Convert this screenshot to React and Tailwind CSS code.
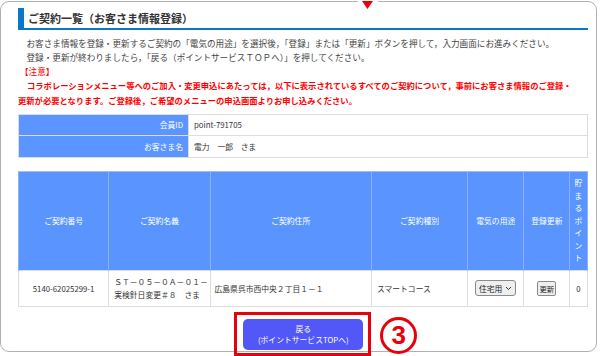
import React from "react";

const headCell =
  "border-x border-[#8fb0f5] bg-[#5a94ff] text-white text-[7.8px] font-normal text-center align-middle";
const bodyCell = "border border-[#dddddd] text-[7.8px] text-[#333] align-middle";

const App = () => {
  return (
    <div className="relative w-[600px] h-[356px] bg-white font-['Noto_Sans_CJK_JP',sans-serif] text-[#444]">
      {/* top pointer */}
      <div className="absolute top-0 left-[358px] w-[20px] h-[4px] bg-white" />
      <svg className="absolute top-0 left-[362px]" width="11" height="8" viewBox="0 0 11 8">
        <polygon points="0,0 11,0 5.5,8" fill="#e8000b" />
      </svg>

      <div className="mt-px h-[351px] w-[597px] border-[1.5px] border-[#b0b0b0] rounded-[9px] pl-[17px] pr-[8.5px] pt-[5.5px]">
        {/* title */}
        <div className="flex h-[22px] border-b-2 border-[#0a78c8]">
          <div className="w-[6px] bg-[#0a78c8]" />
          <h1 className="pl-[4px] text-[11px] font-bold leading-[21px] text-[#333]">
            ご契約一覧（お客さま情報登録）
          </h1>
        </div>

        {/* notes */}
        <div className="mt-[6px] text-[8.6px] leading-[14.3px] whitespace-nowrap">
          <p className="pl-[8.5px]">
            お客さま情報を登録・更新するご契約の「電気の用途」を選択後，「登録」または「更新」ボタンを押して，入力画面にお進みください。
          </p>
          <p className="pl-[8.5px]">
            登録・更新が終わりましたら，「戻る（ポイントサービスＴＯＰへ）」を押してください。
          </p>
          <p className="pl-[2px] text-[#ff0000]">【注意】</p>
          <p className="text-[#ff0000] font-bold text-[8.3px]">
            <span className="pl-[9px]" />
            コラボレーションメニュー等へのご加入・変更申込にあたっては，以下に表示されているすべてのご契約について，事前にお客さま情報のご登録・
            <br />
            更新が必要となります。ご登録後，ご希望のメニューの申込画面よりお申し込みください。
          </p>
        </div>

        {/* member info */}
        <table className="mt-[7px] w-full table-fixed border-collapse border border-[#dddddd]">
          <colgroup>
            <col className="w-[170px]" />
            <col />
          </colgroup>
          <tbody>
            <tr className="h-[21px]">
              <td className="bg-[#5b95ff] border border-[#dddddd] text-right pr-[5px] text-white text-[7.8px]">
                会員ID
              </td>
              <td className="border border-[#dddddd] pl-[5px] text-[7.8px] text-[#333]">point-791705</td>
            </tr>
            <tr className="h-[22px]">
              <td className="bg-[#5b95ff] border border-[#dddddd] text-right pr-[5px] text-white text-[7.8px]">
                お客さま名
              </td>
              <td className="border border-[#dddddd] pl-[5px] text-[7.8px] text-[#333]">
                電力　一郎　さま
              </td>
            </tr>
          </tbody>
        </table>

        {/* contracts */}
        <table className="mt-[13px] w-full table-fixed border-collapse">
          <colgroup>
            <col className="w-[90px]" />
            <col className="w-[101px]" />
            <col className="w-[161px]" />
            <col className="w-[96px]" />
            <col className="w-[56px]" />
            <col className="w-[46px]" />
            <col className="w-[17px]" />
          </colgroup>
          <thead>
            <tr className="h-[99px] border-t border-[#a9bde0]">
              <th className={headCell}>ご契約番号</th>
              <th className={headCell}>ご契約名義</th>
              <th className={headCell}>ご契約住所</th>
              <th className={headCell}>ご契約種別</th>
              <th className={headCell}>電気の用途</th>
              <th className={headCell}>登録更新</th>
              <th className={headCell + " leading-[12.5px]"}>
                {"貯まるポイント".split("").map((c, i) => (
                  <div key={i}>{c}</div>
                ))}
              </th>
            </tr>
          </thead>
          <tbody>
            <tr className="h-[36px]">
              <td className={bodyCell + " text-center"}>5140-62025299-1</td>
              <td className={bodyCell + " pl-[5px] leading-[13px] whitespace-nowrap"}>
                ＳＴ－０５－０Ａ－０１－
                <br />
                実検針日変更＃８　さま
              </td>
              <td className={bodyCell + " pl-[4px] whitespace-nowrap"}>広島県呉市西中央２丁目１－１</td>
              <td className={bodyCell + " pl-[5px]"}>スマートコース</td>
              <td className={bodyCell}>
                <div className="mx-auto flex h-[16px] w-[41px] items-center justify-center gap-[3px] rounded-[3px] border border-[#8a8a8a] bg-[#efefef] text-[7.8px] text-[#222]">
                  住宅用
                  <svg width="7" height="5" viewBox="0 0 7 5">
                    <path d="M1 1 L3.5 3.5 L6 1" stroke="#333" strokeWidth="1" fill="none" />
                  </svg>
                </div>
              </td>
              <td className={bodyCell}>
                <div className="mx-auto flex h-[15px] w-[19px] items-center justify-center rounded-[2px] border border-[#8a8a8a] bg-[#efefef] text-[7.4px] text-[#222]">
                  更新
                </div>
              </td>
              <td className={bodyCell + " text-center"}>0</td>
            </tr>
          </tbody>
        </table>

        {/* back button */}
        <div className="mt-[5px] flex justify-center">
          <div className="relative border-[3px] border-[#e8000b] pl-[6px] pr-[5px] pt-[4px] pb-[3px]">
            <button className="flex h-[31px] w-[120px] flex-col items-center justify-center rounded-[5px] bg-[#5257f8] text-[7.8px] leading-[11px] text-white">
              <span>戻る</span>
              <span>(ポイントサービスTOPへ)</span>
            </button>
            <div className="absolute left-[143px] top-[2px] flex h-[37px] w-[37px] items-center justify-center rounded-full border-[3px] border-[#e8000b] font-['Liberation_Sans',sans-serif] text-[26px] font-bold leading-none text-[#e8000b]">
              3
            </div>
          </div>
        </div>
      </div>
    </div>
  );
};

export default App;
